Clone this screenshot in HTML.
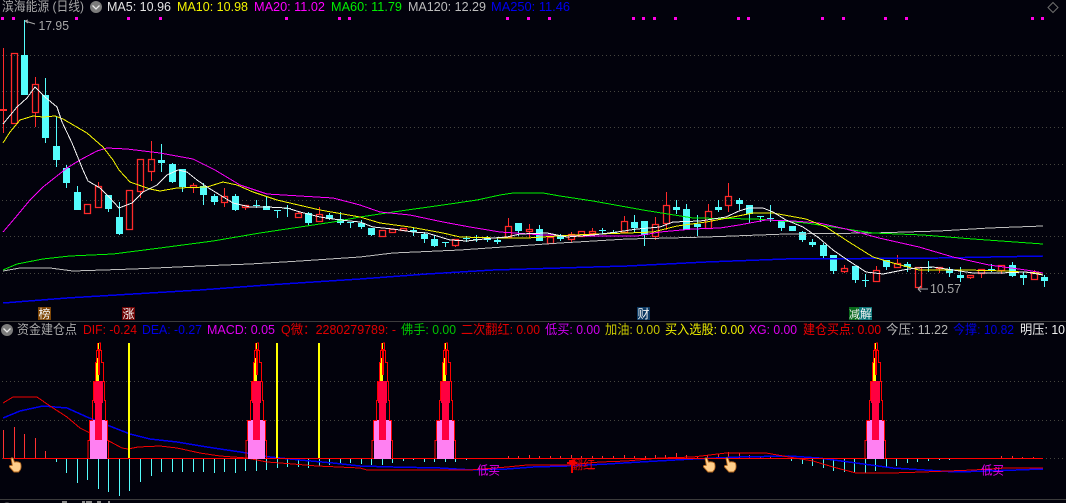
<!DOCTYPE html>
<html><head><meta charset="utf-8"><style>
html,body{margin:0;padding:0;background:#02020c;width:1066px;height:503px;overflow:hidden}
svg{display:block;font-family:"Liberation Sans","Noto Sans CJK SC",sans-serif}
text{font-size:13px}
</style></head><body>
<svg width="1066" height="503" viewBox="0 0 1066 503" xmlns="http://www.w3.org/2000/svg">
<rect width="1066" height="503" fill="#02020c"/>
<!-- grid -->
<g stroke="#45453f" stroke-width="1" stroke-dasharray="1 3" fill="none" shape-rendering="crispEdges">
<path d="M2 55.5H1066M2 91.5H1066M2 127.5H1066M2 164.5H1066M2 200.5H1066M2 236.5H1066M2 273.5H1066"/>
<path d="M2 381.5H1066M2 420.5H1066M2 458.5H1066"/>
</g>
<!-- separators -->
<path d="M0 321.5H1066M0 499.5H1066" stroke="#3c3c3c" shape-rendering="crispEdges"/>
<!-- magenta dots -->
<path fill="#ff00e6" shape-rendering="crispEdges" d="M1 17h3v3h-3zM12 17h3v3h-3zM75 17h3v3h-3zM127 17h3v3h-3zM159 17h3v3h-3zM285 17h3v3h-3zM338 17h3v3h-3zM348 17h3v3h-3zM506 17h3v3h-3zM527 17h3v3h-3zM548 17h3v3h-3zM632 17h3v3h-3zM642 17h3v3h-3zM653 17h3v3h-3zM674 17h3v3h-3zM737 17h3v3h-3zM747 17h3v3h-3zM821 17h3v3h-3zM842 17h3v3h-3zM884 17h3v3h-3zM905 17h3v3h-3zM1031 17h3v3h-3zM1041 17h3v3h-3z"/>
<!-- header -->
<text x="2" y="11" fill="#a8a8a8" textLength="82" lengthAdjust="spacingAndGlyphs">滨海能源 (日线)</text>
<circle cx="96" cy="7" r="6" fill="#7c7c7c"/><path d="M92.5 5.5L96 9L99.5 5.5" fill="none" stroke="#e8e8e8" stroke-width="1.3"/>
<text x="107" y="11" fill="#e4e4e4" textLength="64" lengthAdjust="spacingAndGlyphs">MA5: 10.96</text>
<text x="177" y="11" fill="#f4f400" textLength="71" lengthAdjust="spacingAndGlyphs">MA10: 10.98</text>
<text x="254" y="11" fill="#ff00ff" textLength="71" lengthAdjust="spacingAndGlyphs">MA20: 11.02</text>
<text x="331" y="11" fill="#00f000" textLength="71" lengthAdjust="spacingAndGlyphs">MA60: 11.79</text>
<text x="408" y="11" fill="#bdbdbd" textLength="78" lengthAdjust="spacingAndGlyphs">MA120: 12.29</text>
<text x="491" y="11" fill="#0000f0" textLength="79" lengthAdjust="spacingAndGlyphs">MA250: 11.46</text>
<path d="M1053 2.5l5 5-5 5-5-5z" fill="none" stroke="#6e6e6e"/>
<!-- candles cyan -->
<path fill="#54fcfc" shape-rendering="crispEdges" d="M21 55h7v40h-7zM24 20h1v35h-1zM42 95h7v43h-7zM45 78h1v65h-1zM53 146h7v14h-7zM56 117h1v50h-1zM63 168h7v15h-7zM66 165h1v23h-1zM74 192h7v18h-7zM77 186h1v24h-1zM105 195h7v14h-7zM108 209h1v3h-1zM116 217h7v17h-7zM119 202h1v33h-1zM158 160h7v3h-7zM161 144h1v28h-1zM169 164h7v18h-7zM172 163h1v20h-1zM179 169h7v18h-7zM182 187h1v5h-1zM200 186h7v9h-7zM203 183h1v22h-1zM211 196h7v6h-7zM214 194h1v11h-1zM232 196h7v14h-7zM235 194h1v17h-1zM253 205h7v1h-7zM256 200h1v8h-1zM263 206h7v4h-7zM266 197h1v13h-1zM274 210h7v1h-7zM277 210h1v8h-1zM284 208h7v1h-7zM287 205h1v12h-1zM305 213h7v10h-7zM308 212h1v13h-1zM326 215h7v4h-7zM329 213h1v7h-1zM337 219h7v4h-7zM340 212h1v13h-1zM347 222h7v1h-7zM350 222h1v6h-1zM358 223h7v4h-7zM361 220h1v9h-1zM368 228h7v7h-7zM371 228h1v8h-1zM410 230h7v2h-7zM413 227h1v9h-1zM421 234h7v5h-7zM424 232h1v11h-1zM431 239h7v7h-7zM434 235h1v12h-1zM442 242h7v1h-7zM445 242h1v5h-1zM463 238h7v1h-7zM466 236h1v6h-1zM473 239h7v1h-7zM476 235h1v7h-1zM484 238h7v2h-7zM487 236h1v6h-1zM494 240h7v2h-7zM497 237h1v7h-1zM515 223h7v8h-7zM518 231h1v5h-1zM536 229h7v12h-7zM539 225h1v4h-1zM557 236h7v3h-7zM560 234h1v7h-1zM599 230h7v1h-7zM602 228h1v6h-1zM610 232h7v1h-7zM613 230h1v4h-1zM631 222h7v6h-7zM634 215h1v17h-1zM641 221h7v14h-7zM644 235h1v11h-1zM673 207h7v3h-7zM676 200h1v14h-1zM683 209h7v21h-7zM686 204h1v5h-1zM694 224h7v3h-7zM697 215h1v21h-1zM715 207h7v3h-7zM718 200h1v12h-1zM736 200h7v4h-7zM739 198h1v12h-1zM746 205h7v9h-7zM749 214h1v9h-1zM757 216h7v1h-7zM760 216h1v6h-1zM767 218h7v1h-7zM770 205h1v17h-1zM778 221h7v7h-7zM781 228h1v3h-1zM789 226h7v5h-7zM799 232h7v8h-7zM802 231h1v11h-1zM809 242h7v3h-7zM812 239h1v8h-1zM820 245h7v11h-7zM823 243h1v16h-1zM830 255h7v16h-7zM833 271h1v3h-1zM852 266h7v14h-7zM855 280h1v3h-1zM862 280h7v1h-7zM865 274h1v13h-1zM883 260h7v7h-7zM886 267h1v3h-1zM904 264h7v3h-7zM907 262h1v10h-1zM925 267h7v1h-7zM928 261h1v11h-1zM946 269h7v4h-7zM949 267h1v10h-1zM957 275h7v3h-7zM960 267h1v15h-1zM988 269h7v1h-7zM991 264h1v8h-1zM1009 265h7v11h-7zM1012 262h1v15h-1zM1020 275h7v3h-7zM1023 272h1v13h-1zM1041 277h7v4h-7zM1044 275h1v12h-1z"/>
<!-- candles red -->
<path fill="none" stroke="#ff2a2a" stroke-width="1.3" d="M11.5 53.5h6v70h-6zM32.5 84.5h6v28h-6zM84.5 204.5h6v9h-6zM95.5 186.5h6v21h-6zM126.5 190.5h6v39h-6zM137.5 159.5h6v32h-6zM148.5 159.5h6v12h-6zM190.5 185.5h6v2h-6zM221.5 196.5h6v6h-6zM242.5 205.5h6v2h-6zM295.5 213.5h6v4h-6zM316.5 214.5h6v7h-6zM379.5 230.5h6v6h-6zM389.5 229.5h6v3h-6zM400.5 228.5h6v2h-6zM452.5 239.5h6v6h-6zM505.5 226.5h6v11h-6zM526.5 229.5h6v2h-6zM547.5 237.5h6v6h-6zM568.5 234.5h6v5h-6zM578.5 231.5h6v5h-6zM589.5 231.5h6v2h-6zM621.5 221.5h6v11h-6zM652.5 224.5h6v12h-6zM663.5 205.5h6v18h-6zM705.5 211.5h6v17h-6zM725.5 196.5h6v9h-6zM841.5 268.5h6v3h-6zM873.5 270.5h6v11h-6zM894.5 263.5h6v4h-6zM915.5 267.5h6v20h-6zM936.5 267.5h6v1h-6zM967.5 275.5h6v2h-6zM978.5 269.5h6v4h-6zM998.5 265.5h6v5h-6zM1031.5 273.5h6v6h-6z"/>
<path fill="#ff2a2a" shape-rendering="crispEdges" d="M3 48h1v85h-1zM0 109h7v2h-7zM35 77h1v7h-1zM35 112h1v15h-1zM87 213h1v1h-1zM98 182h1v4h-1zM98 207h1v1h-1zM140 191h1v7h-1zM151 141h1v18h-1zM151 171h1v10h-1zM193 183h1v2h-1zM193 187h1v6h-1zM224 188h1v8h-1zM224 202h1v5h-1zM245 207h1v3h-1zM298 211h1v2h-1zM298 217h1v1h-1zM319 207h1v7h-1zM392 232h1v1h-1zM455 245h1v2h-1zM508 218h1v8h-1zM508 237h1v1h-1zM529 224h1v5h-1zM529 231h1v7h-1zM571 232h1v2h-1zM571 239h1v3h-1zM592 228h1v3h-1zM592 233h1v2h-1zM624 216h1v5h-1zM655 217h1v7h-1zM655 236h1v4h-1zM666 192h1v13h-1zM666 223h1v7h-1zM708 204h1v7h-1zM728 183h1v13h-1zM728 205h1v7h-1zM844 265h1v3h-1zM844 271h1v2h-1zM876 266h1v4h-1zM897 255h1v8h-1zM939 268h1v5h-1zM970 277h1v2h-1zM981 273h1v5h-1zM1001 270h1v4h-1zM1034 270h1v3h-1zM1034 279h1v1h-1z"/>
<!-- MA lines -->
<g fill="none" shape-rendering="crispEdges">
<polyline stroke="#0000f0" stroke-width="1.5" points="3,303 67,298 133,294 200,290 267,285 360,279 427,274 493,270 560,268 627,266 706,262 786,259 939,258 1043,256"/>
<polyline stroke="#bdbdbd" stroke-width="1" points="3,271 20,268 50,268 73,271 133,269 200,266 250,264 300,261 360,257 393,253 460,250 503,247 560,243 627,239 670,238 706,237 786,234 873,233 939,231 989,228 1043,226"/>
<polyline stroke="#00f000" stroke-width="1" points="3,270 17,264 43,259 70,256 113,254 160,248 213,241 260,233 300,227 333,222 360,217 393,212 443,205 477,200 500,195 513,193 528,193 543,193 560,196 593,201 643,210 693,218 756,219 806,223 873,233 923,235 973,239 1043,244"/>
<polyline stroke="#ff00ff" stroke-width="1" points="3,232 15,218 30,200 43,187 67,168 80,160 97,151 107,148 127,149 160,153 193,159 215,170 240,185 267,194 333,198 360,205 380,212 410,215 443,222 470,227 500,232 543,235 593,236 637,236 660,232 693,229 720,228 739,225 766,220 793,221 819,223 846,229 879,238 919,247 953,257 989,265 1026,270 1043,273"/>
<polyline stroke="#f4f400" stroke-width="1" points="3,143 10,132 20,120 33,116 43,117 55,116 63,119 87,133 103,147 113,160 119,170 130,182 150,189 160,191 177,188 207,187 223,182 237,185 253,192 277,200 320,210 360,217 380,223 410,227 443,233 460,237 500,238 527,238 573,235 627,233 653,232 677,226 706,222 733,217 753,213 773,213 806,219 826,227 849,242 873,257 893,263 919,270 966,270 1006,271 1039,273 1043,275"/>
<polyline stroke="#f4f4f4" stroke-width="1" points="3,124 17,107 27,98 35,87 45,97 57,107 62,122 72,143 83,170 88,181 100,188 110,198 119,208 132,203 143,192 157,185 167,175 178,170 187,172 197,180 207,187 220,195 233,203 250,207 267,207 287,208 300,212 320,217 340,220 360,222 373,227 393,229 413,232 427,233 450,240 467,241 493,238 507,237 520,234 547,233 567,237 593,235 617,232 637,229 660,227 673,222 700,221 713,219 726,217 739,211 749,208 763,208 773,212 786,220 803,227 819,238 833,250 849,261 866,272 883,274 903,270 916,268 933,267 953,270 973,273 999,273 1026,272 1043,275"/>
</g>
<!-- labels -->
<path d="M25 21L35 24M25 21l3-1M25 21l3 2" stroke="#aaa" fill="none"/>
<text x="38.5" y="30" fill="#a8a8a8" textLength="30.5" lengthAdjust="spacingAndGlyphs">17.95</text>
<path d="M918 289H928M918 289l3-3M918 289l3 3" stroke="#aaa" fill="none"/>
<text x="930" y="293" fill="#a8a8a8" textLength="31" lengthAdjust="spacingAndGlyphs">10.57</text>
<!-- markers -->
<g shape-rendering="crispEdges">
<rect x="38" y="307" width="13" height="13" fill="#7e4606"/>
<rect x="122" y="307" width="13" height="13" fill="#6e0505"/>
<rect x="637" y="307" width="13" height="13" fill="#0b3862"/>
<rect x="849" y="307" width="11" height="13" fill="#0a6a1c"/>
<rect x="859" y="307" width="13" height="13" fill="#0a7478"/>
</g>
<g fill="#f4f4f4">
<text x="38.5" y="318" style="font-size:12px">榜</text>
<text x="122.5" y="318" style="font-size:12px">涨</text>
<text x="637.5" y="318" style="font-size:12px">财</text>
<text x="849" y="318" style="font-size:11px">减</text>
<text x="860" y="318" style="font-size:12px">解</text>
</g>
<!-- sub header -->
<circle cx="7" cy="330" r="6" fill="#7c7c7c"/><path d="M3.5 328.5L7 332L10.5 328.5" fill="none" stroke="#e8e8e8" stroke-width="1.3"/>
<text x="17" y="334" fill="#a8a8a8" textLength="60" lengthAdjust="spacingAndGlyphs">资金建仓点</text>
<text x="83" y="334" fill="#e00000" textLength="54" lengthAdjust="spacingAndGlyphs">DIF: -0.24</text>
<text x="142" y="334" fill="#0000e6" textLength="60" lengthAdjust="spacingAndGlyphs">DEA: -0.27</text>
<text x="207" y="334" fill="#e000f0" textLength="68" lengthAdjust="spacingAndGlyphs">MACD: 0.05</text>
<text x="281" y="334" fill="#e00000" textLength="115" lengthAdjust="spacingAndGlyphs">Q微：2280279789: -</text>
<text x="401" y="334" fill="#00c400" textLength="55" lengthAdjust="spacingAndGlyphs">佛手: 0.00</text>
<text x="461" y="334" fill="#e00000" textLength="79" lengthAdjust="spacingAndGlyphs">二次翻红: 0.00</text>
<text x="545" y="334" fill="#d000f0" textLength="55" lengthAdjust="spacingAndGlyphs">低买: 0.00</text>
<text x="605" y="334" fill="#c8c800" textLength="55" lengthAdjust="spacingAndGlyphs">加油: 0.00</text>
<text x="665" y="334" fill="#eeee00" textLength="79" lengthAdjust="spacingAndGlyphs">买入选股: 0.00</text>
<text x="749" y="334" fill="#e000f0" textLength="48" lengthAdjust="spacingAndGlyphs">XG: 0.00</text>
<text x="803" y="334" fill="#f00000" textLength="78" lengthAdjust="spacingAndGlyphs">建仓买点: 0.00</text>
<text x="886" y="334" fill="#b4b4b4" textLength="62" lengthAdjust="spacingAndGlyphs">今压: 11.22</text>
<text x="953" y="334" fill="#0000e0" textLength="61" lengthAdjust="spacingAndGlyphs">今撑: 10.82</text>
<text x="1020" y="334" fill="#f0f0f0" textLength="62" lengthAdjust="spacingAndGlyphs">明压: 10.82</text>
<!-- histogram -->
<path fill="none" stroke="#ff3232" shape-rendering="crispEdges" d="M3.5 458V430M14.5 458V427M24.5 458V434M35.5 458V438M45.5 458V451"/>
<path fill="none" stroke="#54fcfc" shape-rendering="crispEdges" d="M56.5 458V462M66.5 458V473M77.5 458V483M87.5 458V480M98.5 458V489M108.5 458V492M119.5 458V496M129.5 458V491M140.5 458V482M151.5 458V476M161.5 458V472M172.5 458V472M182.5 458V472M193.5 458V472M203.5 458V472M214.5 458V473M224.5 458V472M235.5 458V473M245.5 458V471M256.5 458V471M266.5 458V470M277.5 458V468M287.5 458V467M298.5 458V467M308.5 458V468M319.5 458V466M329.5 458V465M340.5 458V464M350.5 458V463M361.5 458V464M371.5 458V465M382.5 458V465M392.5 458V463M403.5 458V461M413.5 458V460M424.5 458V462M434.5 458V462M445.5 458V462M455.5 458V462M466.5 458V460M781.5 458V459M791.5 458V461M802.5 458V464M812.5 458V466M823.5 458V468M833.5 458V471M844.5 458V472M854.5 458V472M865.5 458V473M875.5 458V471M886.5 458V468M896.5 458V466M907.5 458V463M917.5 458V462M928.5 458V461M939.5 458V460M949.5 458V460"/>
<path fill="none" stroke="#ff3232" shape-rendering="crispEdges" d="M508.5 458V456M518.5 458V456M529.5 458V455M539.5 458V456M550.5 458V456M560.5 458V456M571.5 458V455M581.5 458V456M592.5 458V456M602.5 458V456M613.5 458V456M624.5 458V455M634.5 458V456M645.5 458V456M655.5 458V455M665.5 458V455M676.5 458V453M686.5 458V455M697.5 458V456M707.5 458V455M718.5 458V454M728.5 458V452M739.5 458V453M749.5 458V455M760.5 458V456M770.5 458V457M1001.5 458V456M1012.5 458V456M1022.5 458V457M1033.5 458V457"/>
<!-- DEA / DIF -->
<polyline fill="none" stroke="#0000f0" stroke-width="1.5" shape-rendering="crispEdges" points="3,418 20,411 43,406 67,408 87,417 107,425 130,434 150,439 177,442 207,447 247,453 270,457 300,460 333,463 360,466 393,467 440,468 473,470 507,469 533,467 567,466 607,464 640,462 693,459 739,457 789,456 819,458 856,463 893,468 956,472 1016,470 1043,469"/>
<polyline fill="none" stroke="#f00000" stroke-width="1" shape-rendering="crispEdges" points="3,403 13,397 37,397 50,406 67,417 80,428 90,433 107,440 122,448 128,449 138,447 160,446 177,448 200,453 220,456 247,458 267,462 293,464 317,466 360,468 367,470 470,470 507,467 527,465 567,465 600,462 627,461 660,458 693,457 726,453 766,453 789,457 813,461 833,467 856,473 891,473 923,472 973,470 1006,468 1043,468"/>
<!-- yellow -->
<path fill="#ffff00" shape-rendering="crispEdges" d="M128 343h2v115h-2zM276 343h2v115h-2zM318 343h2v115h-2z"/>
<!-- zero line -->
<path d="M3 458.5H1043" stroke="#ff0000" stroke-width="1.4" shape-rendering="crispEdges"/>
<!-- spikes -->
<defs><g id="s" shape-rendering="crispEdges">
<rect x="90" y="420" width="17" height="39" fill="#ff80f2"/>
<rect x="94" y="381" width="9" height="22" fill="#ff0040"/>
<rect x="95" y="403" width="7" height="37" fill="#ff0040"/>
<rect x="97" y="343" width="2" height="6" fill="#ffff00"/>
<rect x="96" y="358" width="3" height="23" fill="#ffff00"/>
<rect x="98" y="349" width="2" height="26" fill="#ff0000"/>
<path fill="none" stroke="#ff0000" d="M88 459V440.5H89.5V420.5H92.5V400.5H93.5V381.5H95.5V362.5H96.5V350.5H97.5V343M108.5 459V440.5H107.5V420.5H105.5V400.5H104.5V381.5H103.5V362.5H101.5V350.5H100.5V343H99"/>
</g>
<g id="h"><path d="M-4 -6.5q1-1.500 2.200 0l1.300 3.500q3.500-.8 6 1q1.200 3.500 0 6.500l-2 2.500h-4.500l-4.500-5q-.5-2 1.800-1.500l1-.2z" fill="#ffcf8c" stroke="#b3651c" stroke-width=".9"/></g>
</defs>
<use href="#s"/>
<use href="#s" x="158"/>
<use href="#s" x="284"/>
<use href="#s" x="347"/>
<use href="#s" x="777"/>
<!-- hands -->
<use href="#h" x="15" y="465"/>
<use href="#h" x="709" y="465"/>
<use href="#h" x="730" y="465"/>
<!-- signal labels -->
<text x="477" y="474.5" fill="#e400f0" textLength="23" lengthAdjust="spacingAndGlyphs" style="font-size:12px">低买</text>
<text x="981" y="474.5" fill="#e400f0" textLength="23" lengthAdjust="spacingAndGlyphs" style="font-size:12px">低买</text>
<text x="571" y="469" fill="#f00000" textLength="24" lengthAdjust="spacingAndGlyphs" style="font-size:12px">翻红</text>
<path fill="#f00000" shape-rendering="crispEdges" d="M571 464h2v9h-2zM567 462h10v2h-10zM569 460h6v2h-6zM587 468h8v1h-8z"/>
<!-- clipped bottom panel fragments -->
<circle cx="7" cy="509" r="6.5" fill="#7c7c7c"/>
<path fill="#8a8a8a" shape-rendering="crispEdges" d="M62 501h5v2h-5zM82 501h3v2h-3zM86 501h6v2h-6zM97 501h4v2h-4zM108 501h2v2h-2z"/>
</svg>
</body></html>
